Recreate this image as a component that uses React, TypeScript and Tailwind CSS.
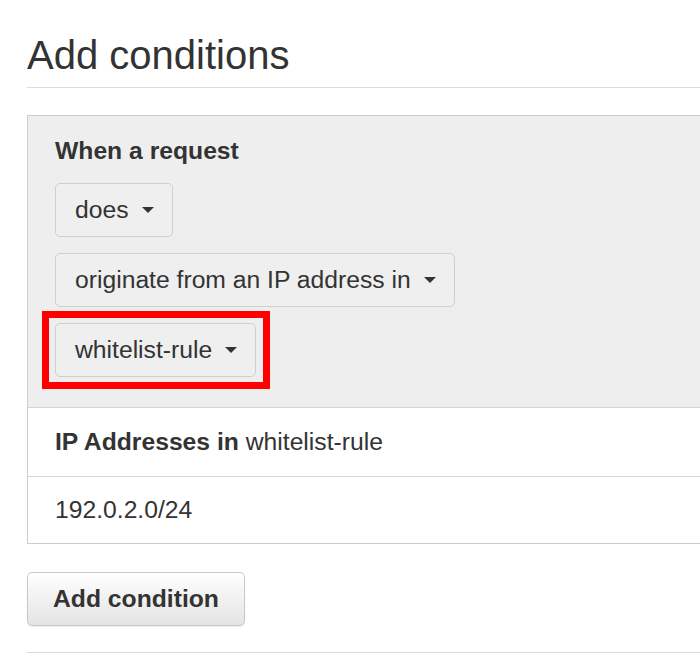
import React from "react";

function Caret() {
  return (
    <span className="ml-[13px] inline-block h-0 w-0 border-x-[6px] border-t-[6px] border-x-transparent border-t-[#333]" />
  );
}

function DropButton({ label }: { label: string }) {
  return (
    <button className="flex items-center rounded-[5px] border border-[#cfcfcf] bg-[#efefef] py-[9px] pl-[19px] pr-[18px] text-left leading-[34px] text-[#333]">
      <span>{label}</span>
      <Caret />
    </button>
  );
}

export default function App() {
  return (
    <div
      className="min-h-[663px] w-full overflow-hidden bg-white text-[24.7px] text-[#333]"
      style={{ fontFamily: '"Liberation Sans", Arial, Helvetica, sans-serif' }}
    >
      <div className="pl-[27px] pt-[33px]">
        <h1 className="pb-[10px] text-[40px] leading-[44px] font-normal text-[#333]">
          Add conditions
        </h1>
        <div className="h-px w-full bg-[#dcdcdc]" />

        <div className="mt-[27px] border-y border-l border-[#cdcdcd]">
          <div className="bg-[#eeeeee] px-[27px] pt-[18px] pb-[30px]">
            <div className="font-bold leading-[34px]">When a request</div>
            <div className="mt-[15px] flex flex-col items-start gap-[16px]">
              <DropButton label="does" />
              <DropButton label="originate from an IP address in" />
              <div className="relative">
                <DropButton label="whitelist-rule" />
                <div className="pointer-events-none absolute -top-[12px] -bottom-[12px] -left-[13px] -right-[14px] border-[7px] border-[#ff0000]" />
              </div>
            </div>
          </div>
          <div className="border-t border-[#d6d6d6] bg-white px-[27px] py-[17px] leading-[34px]">
            <span className="font-bold">IP Addresses in</span> whitelist-rule
          </div>
          <div className="border-t border-[#d6d6d6] bg-white px-[27px] py-[16px] leading-[34px]">
            192.0.2.0/24
          </div>
        </div>

        <button className="mt-[28px] rounded-[5px] border border-[#c8c8c8] bg-gradient-to-b from-white to-[#e4e4e4] px-[25px] py-[9px] font-bold leading-[34px] text-[#333] shadow-[0_1px_1px_rgba(0,0,0,0.08)]">
          Add condition
        </button>

        <div className="mt-[26px] h-px w-full bg-[#dcdcdc]" />
      </div>
    </div>
  );
}
